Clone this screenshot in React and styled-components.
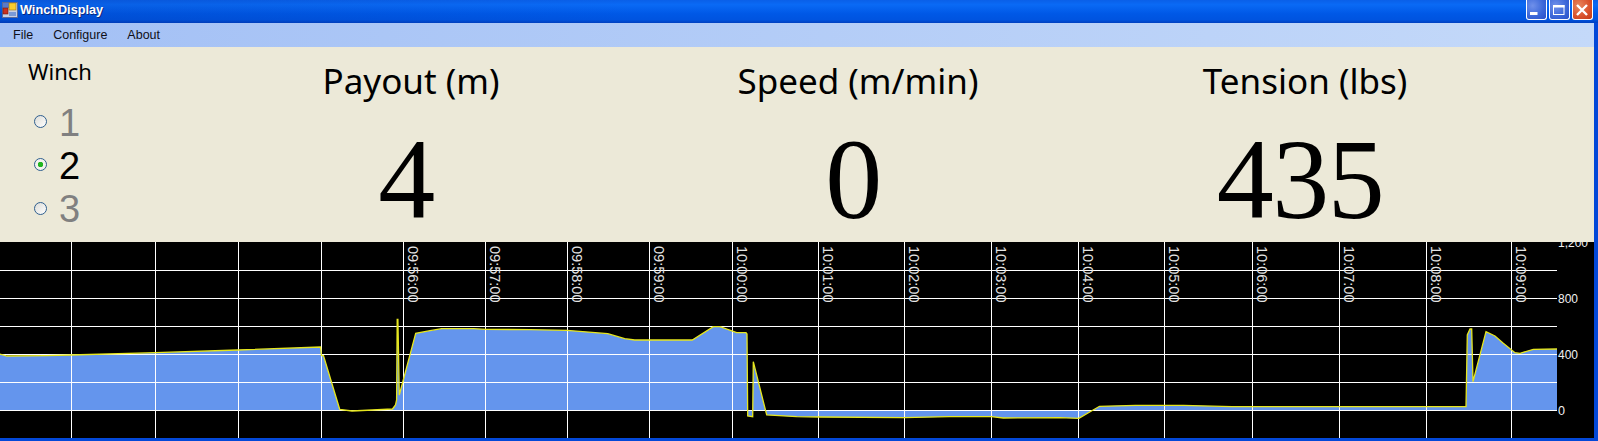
import React from "react";
import styled, {createGlobalStyle} from "styled-components";

const GlobalStyle = createGlobalStyle`
  html, body {
    margin: 0;
    padding: 0;
    background: #0348d8;
    overflow: hidden;
  }
`;

const Win = styled.div`
  width: 1598px;
  height: 441px;
  display: flex;
  flex-direction: column;
  background: #0348d8;
`;

const TitleBar = styled.div`
  height: 23px;
  flex: none;
  display: flex;
  align-items: flex-start;
  padding: 0 5px 0 2px;
  box-sizing: border-box;
  background:
    linear-gradient(90deg, rgba(0, 30, 120, .14), rgba(0, 30, 120, 0) 40%),
    linear-gradient(#0a5fe8 0%, #0a6af5 20%, #0058e6 60%, #0054e0 85%, #0040c0 100%);
`;

const AppIcon = styled.svg`
  width: 16px;
  height: 16px;
  flex: none;
  margin-top: 2px;
`;

const TitleText = styled.div`
  margin: 3px 0 0 2px;
  font: bold 12.7px "Liberation Sans", sans-serif;
  color: #fff;
  text-shadow: 1px 1px 0 #0a2a80;
  flex: 1;
`;

const CtrlButton = styled.div`
  width: 21px;
  height: 20px;
  margin-left: 2px;
  box-sizing: border-box;
  border: 1px solid #fff;
  border-top-width: 0;
  border-radius: 0 0 3px 3px;
  background: ${p => p.$close
    ? "radial-gradient(circle at 30% 30%, #e8875f, #d9502a 60%, #c03a18)"
    : "radial-gradient(circle at 30% 30%, #6f90ea, #3a66d8 60%, #2a50c8)"};
  svg {
    display: block;
  }
`;

const MenuBar = styled.div`
  height: 24px;
  flex: none;
  display: flex;
  align-items: center;
  margin-right: 4px;
  padding-left: 13px;
  gap: 20px;
  background: linear-gradient(90deg, #a3c0f5 0%, #c4d9f9 100%);
`;

const MenuItem = styled.span`
  font: 12.5px "Liberation Sans", sans-serif;
  color: #101018;
`;

const Panel = styled.div`
  height: 195px;
  flex: none;
  margin-right: 4px;
  background: #ece9d8;
  display: grid;
  grid-template-columns: 187.5px 447px 447px 447px 1fr;
`;

const WinchBox = styled.div`
  padding: 12px 0 0 28px;
`;

const WinchTitle = styled.div`
  font: 22px "Noto Sans", sans-serif;
  line-height: 24px;
  color: #000;
`;

const RadioList = styled.div`
  margin-top: 17px;
  display: flex;
  flex-direction: column;
`;

const RadioRow = styled.div`
  height: 43.3px;
  display: flex;
  align-items: center;
  gap: 12px;
  margin-left: 6px;
`;

const RadioDot = styled.span`
  width: 13px;
  height: 13px;
  box-sizing: border-box;
  border: 1px solid #2f5f8f;
  border-radius: 50%;
  background: ${p => p.$on
    ? "radial-gradient(circle, #22b522 0 2.5px, #f2f2ee 3px)"
    : "linear-gradient(135deg, #dcdcd6, #ffffff)"};
`;

const RadioLabel = styled.span`
  font: 38px "Liberation Sans", sans-serif;
  line-height: 44px;
  padding-top: 2px;
  color: ${p => p.$on ? "#000" : "#808080"};
`;

const Readout = styled.div`
  display: flex;
  flex-direction: column;
  align-items: center;
  padding-top: 12px;
`;

const ReadoutTitle = styled.div`
  font: 35px "Noto Sans", sans-serif;
  line-height: 44px;
  color: #000;
`;

const ReadoutValue = styled.div`
  font: 114px "Liberation Serif", serif;
  line-height: 120px;
  letter-spacing: -1.5px;
  margin: 17px 10px 0 0;
  color: #000;
`;

const ChartWrap = styled.div`
  height: 196px;
  flex: none;
  margin-right: 4px;
  background: #000;
`;

const ChartSvg = styled.svg`
  display: block;
  width: 1594px;
  height: 196px;
  overflow: hidden;
`;

const TOP = 242;
const RIGHT = 1557;

const curve = [
  [0, 354], [7, 356], [46, 355.7], [71, 355], [155.5, 352.7], [238, 350], [320.5, 347], [321.5, 355.7], [323.5, 355.7],
  [339.7, 409.3], [352, 411], [392.5, 409], [395.5, 405], [396.6, 400], [397.2, 319.3], [397.9, 319.3], [399.3, 395],
  [415.7, 333.3], [430, 330.7], [441.7, 328.7], [473.6, 328.7], [485.5, 329.3], [530, 329.7], [567, 330.3], [607.8, 333.7],
  [624.7, 338.7], [634.8, 340], [692.3, 340], [713.3, 326.7], [720, 326.7], [736.7, 332.7], [746, 332.7], [747, 334],
  [747.7, 416], [752.7, 416.7], [753.3, 361.7], [766.7, 415], [796.7, 416.7], [820, 417], [904, 417.7], [949.2, 416.7],
  [991.5, 416.7], [1003.3, 418], [1060, 417.7], [1078.9, 418.3], [1099.5, 406.3], [1135.5, 405.3], [1183.5, 405.3],
  [1231.6, 406.7], [1466, 406.7], [1467.3, 335], [1470, 329], [1471.7, 329], [1473, 381.7], [1486, 331.7], [1495, 336],
  [1503.3, 343.3], [1515, 352.7], [1520, 353.3], [1533.3, 349.3], [RIGHT, 349],
];

const toPoints = pts => pts.map(([x, y]) => `${x},${y - TOP}`).join(" ");

const hLines = [270, 298, 326, 354, 382, 410];

const vLines = [71, 155, 238, 321, 403, 485, 567, 649, 732, 818, 904, 991, 1078, 1164, 1252, 1339, 1426, 1511];

const timeLabels = [
  [403, "09:56:00"], [485, "09:57:00"], [567, "09:58:00"], [649, "09:59:00"], [732, "10:00:00"], [818, "10:01:00"],
  [904, "10:02:00"], [991, "10:03:00"], [1078, "10:04:00"], [1164, "10:05:00"], [1252, "10:06:00"], [1339, "10:07:00"],
  [1426, "10:08:00"], [1511, "10:09:00"],
];

const yLabels = [[242, "1,200", 30], [298, "800", 20], [354, "400", 20], [410, "0", 7]];

const Chart = () => (
  <ChartWrap>
    <ChartSvg viewBox="0 0 1594 196">
      <polygon
        points={toPoints([[0, 410], ...curve, [RIGHT, 410]])}
        fill="#6495ed"
      />
      {hLines.map(y => (
        <line key={y} x1="0" x2={RIGHT} y1={y - TOP + 0.5} y2={y - TOP + 0.5} stroke="#fff" strokeWidth="1"/>
      ))}
      {vLines.map(x => (
        <line key={x} x1={x + 0.5} x2={x + 0.5} y1="0" y2="196" stroke="#fff" strokeWidth="1"/>
      ))}
      <polyline points={toPoints(curve)} fill="none" stroke="#e6e61e" strokeWidth="1.3"/>
      {timeLabels.map(([x, t]) => (
        <text
          key={t}
          transform={`translate(${x + 4.5} ${246 - TOP}) rotate(90)`}
          fontFamily="Liberation Sans, sans-serif"
          fontSize="14.5"
          fill="#e4e4e4"
        >{t}</text>
      ))}
      {yLabels.map(([y, t, w]) => (
        <text
          key={t}
          x="1558"
          y={y - TOP + 5}
          fontFamily="Liberation Sans, sans-serif"
          fontSize="13"
          fill="#f0f0f0"
          textLength={w}
          lengthAdjust="spacingAndGlyphs"
        >{t}</text>
      ))}
    </ChartSvg>
  </ChartWrap>
);

const readouts = [
  {title: "Payout (m)", value: "4"},
  {title: "Speed (m/min)", value: "0"},
  {title: "Tension (lbs)", value: "435"},
];

const winches = [1, 2, 3];

export default function App() {
  return (
    <Win>
      <GlobalStyle/>
      <TitleBar>
        <AppIcon viewBox="0 0 16 16">
          <rect x="0.5" y="0.5" width="15" height="15" fill="#c8d0e4" stroke="#5a6a9a"/>
          <rect x="1" y="1" width="6" height="5" fill="#5a7ac8"/>
          <rect x="7" y="1" width="7" height="7" fill="#f8cc30" stroke="#a07810" strokeWidth="0.6"/>
          <rect x="1" y="6" width="5" height="6" fill="#c83020" stroke="#701810" strokeWidth="0.6"/>
          <rect x="7" y="10" width="7" height="4" fill="#7a9ad8"/>
        </AppIcon>
        <TitleText>WinchDisplay</TitleText>
        <CtrlButton>
          <svg width="19" height="19" viewBox="0 0 19 19"><rect x="3" y="12" width="7.5" height="3" fill="#fff"/></svg>
        </CtrlButton>
        <CtrlButton>
          <svg width="19" height="19" viewBox="0 0 19 19"><rect x="3.5" y="5.5" width="10.5" height="9" fill="none" stroke="#fff"/><rect x="3" y="5" width="11.5" height="2.5" fill="#fff"/></svg>
        </CtrlButton>
        <CtrlButton $close>
          <svg width="19" height="19" viewBox="0 0 19 19"><path d="M4 5L14 15M14 5L4 15" stroke="#fff" strokeWidth="2.4"/></svg>
        </CtrlButton>
      </TitleBar>
      <MenuBar>
        <MenuItem>File</MenuItem>
        <MenuItem>Configure</MenuItem>
        <MenuItem>About</MenuItem>
      </MenuBar>
      <Panel>
        <WinchBox>
          <WinchTitle>Winch</WinchTitle>
          <RadioList>
            {winches.map(n => (
              <RadioRow key={n}>
                <RadioDot $on={n === 2}/>
                <RadioLabel $on={n === 2}>{n}</RadioLabel>
              </RadioRow>
            ))}
          </RadioList>
        </WinchBox>
        {readouts.map(r => (
          <Readout key={r.title}>
            <ReadoutTitle>{r.title}</ReadoutTitle>
            <ReadoutValue>{r.value}</ReadoutValue>
          </Readout>
        ))}
      </Panel>
      <Chart/>
    </Win>
  );
}
